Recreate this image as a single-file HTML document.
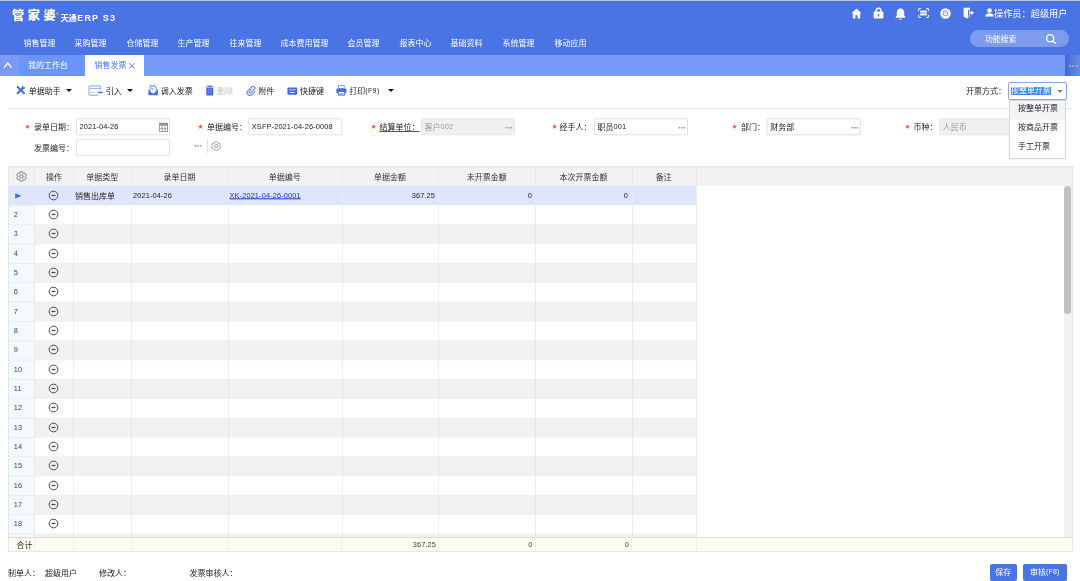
<!DOCTYPE html><html lang="zh-CN"><head><meta charset="utf-8"><title>销售发票</title><style>
*{margin:0;padding:0;box-sizing:border-box}
html,body{width:1080px;height:581px;overflow:hidden;background:#fff}
body{position:relative;will-change:transform;font-family:"Liberation Sans","Noto Sans CJK SC",sans-serif;font-size:8px;color:#222;line-height:1}
.a{position:absolute;white-space:nowrap}
.t{position:absolute;white-space:nowrap;line-height:10px;height:10px;margin-top:1px}
#top{left:0;top:0;width:1080px;height:55px;background:#4a74e4}
#topline{left:0;top:0;width:1080px;height:1px;background:#b9c3e6}
.menu{color:#fff;font-size:8px;top:37.8px}
#tabs{left:0;top:55px;width:1080px;height:21px;background:#769bf9}
#tabcol{left:0;top:55px;width:19px;height:21px;background:#7b9af5}
#tab1{left:19px;top:55px;width:66px;height:21px;background:#6a95fa;color:#fff;padding-left:9px;line-height:22.4px}
#tab2{left:85px;top:55px;width:59px;height:21px;background:#fff;color:#4a74e4;line-height:22.4px}
#more{left:1065px;top:55px;width:15px;height:21px;background:linear-gradient(90deg,#3f68d8,#6a8de8);color:#c9a86a;text-align:center;line-height:18px;font-size:8px}
.tb{top:86.2px;color:#222}
.sep{left:8px;top:108px;width:1064px;height:1px;background:#e4e4e4}
.star{color:#f2522e;font-size:8px}
.inp{position:absolute;left:0;top:0;height:17.2px;width:94.3px;border:1px solid #e1e1e1;border-radius:1px;background:#fff}
.inp.dis{background:#f0f0f0;border-color:#e6e6e6}
.lbl{color:#222}
.dots{color:#888;letter-spacing:0.3px;font-size:8px}
.num{font-size:7.4px;letter-spacing:0.12px;transform:translateY(-0.7px)}span.num{display:inline-block}
</style></head><body>
<div class="a" id="top"></div><div class="a" id="topline"></div>
<div class="t" style="left:12.1px;top:6.9px;color:#fff;font-size:12.3px;font-weight:900;line-height:16px;height:16px;letter-spacing:3.4px;font-family:'Liberation Sans','Noto Sans CJK SC',sans-serif">管家婆</div>
<div class="t" style="left:56.5px;top:8px;color:#fff;font-size:3px">®</div>
<div class="t" style="left:60.6px;top:12.2px;color:#fff;font-size:8.3px;font-weight:700;letter-spacing:-0.3px">天通<span style="letter-spacing:1.2px;font-size:9px;margin-left:0.6px">ERP S3</span></div>
<div class="t menu" style="left:23.5px">销售管理</div>
<div class="t menu" style="left:74.5px">采购管理</div>
<div class="t menu" style="left:126.5px">仓储管理</div>
<div class="t menu" style="left:177.5px">生产管理</div>
<div class="t menu" style="left:229.5px">往来管理</div>
<div class="t menu" style="left:280.5px">成本费用管理</div>
<div class="t menu" style="left:347.5px">会员管理</div>
<div class="t menu" style="left:399.5px">报表中心</div>
<div class="t menu" style="left:450.5px">基础资料</div>
<div class="t menu" style="left:502.5px">系统管理</div>
<div class="t menu" style="left:554.5px">移动应用</div>
<svg class="a" style="left:851px;top:8px" width="11" height="11" viewBox="0 0 11 11"><path d="M5.5 0.6 L0.5 5.3 H1.8 V10.4 H4.4 V7.2 H6.6 V10.4 H9.2 V5.3 H10.5 Z" fill="#fff"/></svg>
<svg class="a" style="left:873.2px;top:7.2px" width="11" height="12" viewBox="0 0 11 12"><path d="M3.1 5.2 V3.6 a2.4 2.4 0 0 1 4.8 0 V5.2" fill="none" stroke="#fff" stroke-width="1.4"/><rect x="0.6" y="4.6" width="9.8" height="6.8" rx="0.8" fill="#fff"/><circle cx="5.5" cy="7.8" r="0.9" fill="#4a74e4"/><rect x="5.1" y="8" width="0.8" height="1.8" fill="#4a74e4"/></svg>
<svg class="a" style="left:895.4px;top:7.5px" width="11" height="12.5" viewBox="0 0 11 12.5"><path d="M5.5 0.5 C2.6 0.5 1.8 2.8 1.8 4.8 V7.2 L0.4 9.7 H10.6 L9.2 7.2 V4.8 C9.2 2.8 8.4 0.5 5.5 0.5 Z" fill="#fff"/><path d="M4.2 10.5 H6.8 A1.3 1.3 0 0 1 4.2 10.5Z" fill="#fff"/></svg>
<svg class="a" style="left:918px;top:8px" width="11" height="10" viewBox="0 0 11 10"><path d="M0.6 3 V0.6 H3 M8 0.6 H10.4 V3 M10.4 7 V9.4 H8 M3 9.4 H0.6 V7" fill="none" stroke="#fff" stroke-width="0.9"/><rect x="2.2" y="2.6" width="6.6" height="2" fill="#fff"/><rect x="2.2" y="5.4" width="6.6" height="2" fill="#fff"/></svg>
<svg class="a" style="left:940.3px;top:8.3px" width="11" height="11" viewBox="0 0 11 11"><circle cx="5.5" cy="5.5" r="5.2" fill="#fff"/><circle cx="5.5" cy="5.3" r="2.5" fill="none" stroke="#5d83e8" stroke-width="0.9"/><circle cx="5.5" cy="5" r="0.8" fill="#7d9bed"/></svg>
<svg class="a" style="left:962.5px;top:7.1px" width="12" height="12" viewBox="0 0 12 12"><path d="M0.8 0.8 H6.8 V2.4 H5 V10.2 H6.8 V10.6 H5 L4.8 11.4 L0.8 9.8 Z" fill="#fff"/><path d="M0.8 0.8 L4.8 2.2 V11.4 L0.8 9.8Z" fill="#fff"/><path d="M6.2 4.8 H8.4 V3.4 L11 5.8 L8.4 8.2 V6.8 H6.2Z" fill="#fff"/><path d="M6.3 1.2 V4.4 M6.3 7.2 V10.2" stroke="#fff" stroke-width="0.9"/></svg>
<svg class="a" style="left:984.8px;top:8.3px" width="9" height="9" viewBox="0 0 9 9"><circle cx="4.5" cy="2.5" r="2.3" fill="#fff"/><path d="M0.3 8.6 C0.3 6.2 2 5.3 4.5 5.3 S8.7 6.2 8.7 8.6 Z" fill="#fff"/></svg>

<div class="t" style="left:994px;top:8px;color:#fff;font-size:9.2px;line-height:11px;height:11px">操作员：超级用户</div>
<div class="a" style="left:970px;top:29.5px;width:98.5px;height:17.5px;border-radius:9px;background:#7f9cec"></div>
<div class="t" style="left:985px;top:34px;color:#fff;font-size:7.8px">功能搜索</div>
<svg class="a" style="left:1045px;top:33px" width="12" height="12" viewBox="0 0 12 12"><circle cx="5.2" cy="5.2" r="3.6" fill="none" stroke="#fff" stroke-width="1.3"/><path d="M7.9 8 L10.4 10.2" stroke="#fff" stroke-width="1.4" stroke-linecap="round"/></svg>

<div class="a" id="tabs"></div><div class="a" id="tabcol"></div>
<div class="a" id="tab1">我的工作台</div>
<div class="a" id="tab2"><span style="margin-left:9.5px">销售发票</span><svg style="position:absolute;left:43.3px;top:6.7px" width="8" height="8" viewBox="0 0 8 8"><path d="M1 1 L6.6 6.6 M6.6 1 L1 6.6" stroke="#6a89ea" stroke-width="1"/></svg></div>
<div class="a" id="more"></div>
<div class="a" style="left:1068.5px;top:64.8px;width:2px;height:2px;border-radius:1px;background:#c9b27a"></div>
<div class="a" style="left:1072px;top:64.8px;width:2px;height:2px;border-radius:1px;background:#c9b27a"></div>
<div class="a" style="left:1075.5px;top:64.8px;width:2px;height:2px;border-radius:1px;background:#c9b27a"></div>
<svg class="a" style="left:3.2px;top:61.4px" width="10" height="8" viewBox="0 0 10 8"><path d="M1 6.6 L4.8 2 L8.6 6.6" fill="none" stroke="#fff" stroke-width="1.35"/></svg>
<svg class="a" style="left:16px;top:85.3px" width="10" height="10" viewBox="0 0 10 10"><path d="M1.6 1.9 L8 8.3" stroke="#4068e2" stroke-width="2" stroke-linecap="round"/><path d="M1.6 8.3 L7.2 2.7" stroke="#4068e2" stroke-width="2" stroke-linecap="round"/><circle cx="7.3" cy="2.5" r="1.75" fill="#4068e2"/><circle cx="8.2" cy="1.5" r="0.95" fill="#fff"/></svg>
<div class="t tb" style="left:28.7px">单据助手</div>
<div class="a" style="left:65.5px;top:89.2px;width:0;height:0;border-left:3.5px solid transparent;border-right:3.5px solid transparent;border-top:3.5px solid #111"></div>
<svg class="a" style="left:87.5px;top:85px" width="16" height="11" viewBox="0 0 16 11"><path d="M12.7 4.7 V2 Q12.7 0.9 11.6 0.9 H2 Q0.9 0.9 0.9 2 V9.2 Q0.9 10.3 2 10.3 H10" fill="none" stroke="#9db4f8" stroke-width="1.15"/><path d="M0.9 3.4 H12.7" stroke="#9db4f8" stroke-width="1.1"/><path d="M2.6 7.5 H6" stroke="#a9bdf8" stroke-width="0.9"/><path d="M10.4 7.5 H14" stroke="#4a70e6" stroke-width="1.6" stroke-linecap="round"/></svg>
<div class="t tb" style="left:105.7px">引入</div>
<div class="a" style="left:126.8px;top:89.2px;width:0;height:0;border-left:3.5px solid transparent;border-right:3.5px solid transparent;border-top:3.5px solid #111"></div>
<svg class="a" style="left:147.7px;top:85px" width="10.4" height="10.8" viewBox="0 0 11 11" preserveAspectRatio="none"><path d="M2.3 0.3 H7.2 L9.2 2.3 V7.5 H1.7 V0.9 Q1.7 0.3 2.3 0.3Z" fill="#7595f0"/><path d="M2.7 1.5 H6.8 L8.2 2.9 V6.4 L5.45 8.6 L2.7 6.4Z" fill="#fff"/><ellipse cx="4.6" cy="3.9" rx="1.5" ry="0.95" fill="#a3b9f6" transform="rotate(20 4.6 3.9)"/><path d="M0.4 5 L1.7 4.6 V6.5 L5.45 9 L9.2 6.5 V4.6 L10.5 5 V10.1 Q10.5 10.5 10.1 10.5 H0.8 Q0.4 10.5 0.4 10.1Z" fill="#4169e1"/></svg>
<div class="t tb" style="left:160.7px">调入发票</div>
<svg class="a" style="left:205px;top:85px" width="9" height="11" viewBox="0 0 9 11"><path d="M2.2 0.6 H7.4 V2 H2.2Z" fill="#4a70e6"/><path d="M0.3 2.3 H8.7" stroke="#9db3f6" stroke-width="0.7"/><path d="M1.3 2.7 H8.3 V9.5 Q8.3 10.4 7.4 10.4 H2.2 Q1.3 10.4 1.3 9.5Z" fill="#4169e1"/><path d="M3.7 3.4 V8.6 M5.9 3.4 V8.6" stroke="#7f9cf0" stroke-width="0.7"/></svg>
<div class="t tb" style="left:217px;color:#c4c4c4">删除</div>
<svg class="a" style="left:245.5px;top:85.5px" width="11" height="10" viewBox="0 0 11 10"><path d="M5.4 3.6 L3.4 5.7 A1.05 1.05 0 0 0 4.9 7.2 L8.8 3.3 A2 2 0 0 0 6 0.9 L1.6 5.1 A2.9 2.9 0 0 0 5.7 9.1 L9 5.9" fill="none" stroke="#6a8df1" stroke-width="1.2" stroke-linecap="round" transform="translate(0 -0.3)"/></svg>
<div class="t tb" style="left:258.3px">附件</div>
<svg class="a" style="left:287px;top:86.5px" width="11" height="8.5" viewBox="0 0 11 8.5"><rect x="0.4" y="0.4" width="9.8" height="7.3" rx="1.2" fill="#456ae6"/><rect x="2" y="2.1" width="6.6" height="1.2" fill="#a9bdf7"/><rect x="3" y="4.9" width="4.6" height="1.1" fill="#dfe7fd"/></svg>
<div class="t tb" style="left:300px">快捷键</div>
<svg class="a" style="left:336px;top:85px" width="11" height="11" viewBox="0 0 11 11"><rect x="2.6" y="0.5" width="5.6" height="3.2" fill="#fff" stroke="#6d90f2" stroke-width="0.8"/><rect x="0.4" y="3.4" width="10" height="4.8" rx="0.8" fill="#456ae6"/><rect x="2.4" y="6.6" width="6" height="3.6" fill="#fff" stroke="#456ae6" stroke-width="0.8"/><rect x="3.2" y="8.4" width="4.4" height="1.4" fill="#6d90f2"/></svg>
<div class="t tb" style="left:349.2px">打印<span class="num" style="font-size:7px;letter-spacing:0.4px">(F9)</span></div>
<div class="a" style="left:388.2px;top:89.2px;width:0;height:0;border-left:3.5px solid transparent;border-right:3.5px solid transparent;border-top:3.5px solid #111"></div>

<div class="a sep"></div>
<div class="t lbl" style="left:966px;top:86px">开票方式：</div>
<div class="a" style="left:1008px;top:82px;width:59px;height:17.5px;border:1px solid #8ba6f0;border-radius:2px;background:#fff"></div>
<div class="t" style="left:1011.1px;top:85.8px;background:#3b8cf6;color:#fff;width:39.6px;line-height:7.8px;height:7.8px;font-size:7.9px">按整单开票</div>
<div class="a" style="left:1057px;top:89.5px;width:0;height:0;border-left:3px solid transparent;border-right:3px solid transparent;border-top:3.5px solid #888"></div>
<svg class="a" style="left:25.2px;top:123.8px" width="5" height="5" viewBox="0 0 10 10"><path d="M5 0.3 L6.3 3.6 L9.8 3.8 L7.1 6.1 L8 9.6 L5 7.6 L2 9.6 L2.9 6.1 L0.2 3.8 L3.7 3.6Z" fill="#ef5a36"/></svg>
<div class="t lbl" style="left:34px;top:122px">录单日期：</div>
<div class="inp" style="transform:translate(76px,118.3px)"></div>
<div class="t" style="left:79.5px;top:122px;color:#222"><span class="num">2021-04-26</span></div>
<svg class="a" style="left:198.2px;top:123.8px" width="5" height="5" viewBox="0 0 10 10"><path d="M5 0.3 L6.3 3.6 L9.8 3.8 L7.1 6.1 L8 9.6 L5 7.6 L2 9.6 L2.9 6.1 L0.2 3.8 L3.7 3.6Z" fill="#ef5a36"/></svg>
<div class="t lbl" style="left:207px;top:122px">单据编号：</div>
<div class="inp" style="transform:translate(248.3px,118.3px)"></div>
<div class="t" style="left:251.8px;top:122px;color:#222"><span class="num">XSFP-2021-04-26-0008</span></div>
<svg class="a" style="left:371.2px;top:123.8px" width="5" height="5" viewBox="0 0 10 10"><path d="M5 0.3 L6.3 3.6 L9.8 3.8 L7.1 6.1 L8 9.6 L5 7.6 L2 9.6 L2.9 6.1 L0.2 3.8 L3.7 3.6Z" fill="#ef5a36"/></svg>
<div class="t lbl" style="left:379.5px;top:122px;text-decoration:underline;text-decoration-color:#2b4fe0;text-underline-offset:1px;text-decoration-skip-ink:none">结算单位：</div>
<div class="inp dis" style="transform:translate(421px,118.3px)"></div>
<div class="t" style="left:424.5px;top:122px;color:#999">客户<span class="num">002</span></div>
<svg class="a" style="left:505.2px;top:125.6px" width="9" height="4" viewBox="0 0 9 4"><rect x="0.5" y="1" width="1.6" height="1.5" fill="#9a9aa8"/><rect x="3.1" y="1" width="1.6" height="1.5" fill="#9a9aa8"/><rect x="5.7" y="1" width="1.6" height="1.5" fill="#9a9aa8"/></svg>
<svg class="a" style="left:551.7px;top:123.8px" width="5" height="5" viewBox="0 0 10 10"><path d="M5 0.3 L6.3 3.6 L9.8 3.8 L7.1 6.1 L8 9.6 L5 7.6 L2 9.6 L2.9 6.1 L0.2 3.8 L3.7 3.6Z" fill="#ef5a36"/></svg>
<div class="t lbl" style="left:559.5px;top:122px">经手人：</div>
<div class="inp" style="transform:translate(594px,118.3px)"></div>
<div class="t" style="left:597.5px;top:122px;color:#222">职员<span class="num">001</span></div>
<svg class="a" style="left:678.2px;top:125.6px" width="9" height="4" viewBox="0 0 9 4"><rect x="0.5" y="1" width="1.6" height="1.5" fill="#9a9aa8"/><rect x="3.1" y="1" width="1.6" height="1.5" fill="#9a9aa8"/><rect x="5.7" y="1" width="1.6" height="1.5" fill="#9a9aa8"/></svg>
<svg class="a" style="left:731.7px;top:123.8px" width="5" height="5" viewBox="0 0 10 10"><path d="M5 0.3 L6.3 3.6 L9.8 3.8 L7.1 6.1 L8 9.6 L5 7.6 L2 9.6 L2.9 6.1 L0.2 3.8 L3.7 3.6Z" fill="#ef5a36"/></svg>
<div class="t lbl" style="left:741px;top:122px">部门：</div>
<div class="inp" style="transform:translate(766.7px,118.3px)"></div>
<div class="t" style="left:770.2px;top:122px;color:#222">财务部</div>
<svg class="a" style="left:850.9px;top:125.6px" width="9" height="4" viewBox="0 0 9 4"><rect x="0.5" y="1" width="1.6" height="1.5" fill="#9a9aa8"/><rect x="3.1" y="1" width="1.6" height="1.5" fill="#9a9aa8"/><rect x="5.7" y="1" width="1.6" height="1.5" fill="#9a9aa8"/></svg>
<svg class="a" style="left:905.2px;top:123.8px" width="5" height="5" viewBox="0 0 10 10"><path d="M5 0.3 L6.3 3.6 L9.8 3.8 L7.1 6.1 L8 9.6 L5 7.6 L2 9.6 L2.9 6.1 L0.2 3.8 L3.7 3.6Z" fill="#ef5a36"/></svg>
<div class="t lbl" style="left:913.5px;top:122px">币种：</div>
<div class="inp dis" style="transform:translate(939.3px,118.3px)"></div>
<div class="t" style="left:942.8px;top:122px;color:#999">人民币</div>
<div class="t lbl" style="left:34px;top:142.5px">发票编号：</div>
<div class="inp" style="transform:translate(76px,139.2px)"></div>
<svg class="a" style="left:193.9px;top:144.4px" width="9" height="4" viewBox="0 0 9 4"><rect x="0.5" y="1" width="1.6" height="1.5" fill="#9a9aa8"/><rect x="3.1" y="1" width="1.6" height="1.5" fill="#9a9aa8"/><rect x="5.7" y="1" width="1.6" height="1.5" fill="#9a9aa8"/></svg>
<div class="a" style="left:207px;top:139px;width:1px;height:14.3px;background:#e2e2e2"></div>
<svg class="a" style="left:158.8px;top:121.8px" width="9.3" height="10.6" viewBox="0 0 10 11" preserveAspectRatio="none"><path d="M2.2 0.4 V2 M5 0.4 V2 M7.8 0.4 V2" stroke="#8c8c8c" stroke-width="0.9"/><rect x="0.5" y="1.3" width="9" height="2.5" fill="#909090"/><rect x="0.7" y="1.5" width="8.6" height="8.6" fill="none" stroke="#8a8a8a" stroke-width="0.9"/><path d="M3.55 3.8 V10 M6.45 3.8 V10 M0.8 6.9 H9.2" stroke="#8e8e8e" stroke-width="0.8"/></svg>
<svg class="a" style="left:211.1px;top:141.2px" width="10.3" height="10.3" viewBox="0 0 11 11"><path d="M5.50 0.67 Q6.79 0.67 6.93 1.41 Q7.08 2.15 7.34 2.31 Q7.61 2.46 8.32 2.21 Q9.04 1.96 9.68 3.09 Q10.33 4.21 9.76 4.70 Q9.19 5.19 9.19 5.50 Q9.19 5.81 9.76 6.30 Q10.33 6.79 9.68 7.91 Q9.04 9.04 8.32 8.79 Q7.61 8.54 7.34 8.69 Q7.08 8.85 6.93 9.59 Q6.79 10.33 5.50 10.33 Q4.21 10.33 4.07 9.59 Q3.92 8.85 3.66 8.69 Q3.39 8.54 2.68 8.79 Q1.96 9.04 1.32 7.91 Q0.67 6.79 1.24 6.30 Q1.81 5.81 1.81 5.50 Q1.81 5.19 1.24 4.70 Q0.67 4.21 1.32 3.09 Q1.96 1.96 2.68 2.21 Q3.39 2.46 3.66 2.31 Q3.92 2.15 4.07 1.41 Q4.21 0.67 5.50 0.67Z" fill="none" stroke="#84848c" stroke-width="0.8" stroke-linejoin="round"/><circle cx="5.5" cy="5.5" r="1.7" fill="none" stroke="#84848c" stroke-width="0.8"/></svg>

<div class="a" style="left:1009px;top:100px;width:57px;height:58.5px;border:1px solid #d8d8d8;background:#fff;box-shadow:0 0.5px 1.5px rgba(0,0,0,.08)"></div>
<div class="a" style="left:1010px;top:101px;width:55px;height:18.5px;background:#f3f5f7"></div>
<div class="t" style="left:1018px;top:102.6px;color:#222">按整单开票</div>
<div class="t" style="left:1018px;top:121.89999999999999px;color:#222">按商品开票</div>
<div class="t" style="left:1018px;top:141.2px;color:#222">手工开票</div>
<div class="a" style="left:8px;top:166px;width:1064px;height:20px;background:#f2f2f2;border-top:1px solid #e4e8ed;border-bottom:1px solid #eceff3"></div>
<div class="a" style="left:8px;top:167px;width:1064px;height:1px;background:#e4e8ed;opacity:0.5"></div>
<svg class="a" style="left:0;top:186px" width="1080" height="352" viewBox="0 186 1080 352"><rect x="8.5" y="186" width="26" height="351.5" fill="#f4f9fe"/><rect x="8.5" y="204.93" width="26" height="0.9" fill="#e3ecf6"/><rect x="34.5" y="224.27" width="661.8" height="20.13" fill="#f1f1f1"/><rect x="8.5" y="224.27" width="26" height="0.9" fill="#e3ecf6"/><rect x="8.5" y="243.60" width="26" height="0.9" fill="#e3ecf6"/><rect x="34.5" y="262.93" width="661.8" height="20.13" fill="#f1f1f1"/><rect x="8.5" y="262.93" width="26" height="0.9" fill="#e3ecf6"/><rect x="8.5" y="282.26" width="26" height="0.9" fill="#e3ecf6"/><rect x="34.5" y="301.60" width="661.8" height="20.13" fill="#f1f1f1"/><rect x="8.5" y="301.60" width="26" height="0.9" fill="#e3ecf6"/><rect x="8.5" y="320.93" width="26" height="0.9" fill="#e3ecf6"/><rect x="34.5" y="340.26" width="661.8" height="20.13" fill="#f1f1f1"/><rect x="8.5" y="340.26" width="26" height="0.9" fill="#e3ecf6"/><rect x="8.5" y="359.60" width="26" height="0.9" fill="#e3ecf6"/><rect x="34.5" y="378.93" width="661.8" height="20.13" fill="#f1f1f1"/><rect x="8.5" y="378.93" width="26" height="0.9" fill="#e3ecf6"/><rect x="8.5" y="398.26" width="26" height="0.9" fill="#e3ecf6"/><rect x="34.5" y="417.60" width="661.8" height="20.13" fill="#f1f1f1"/><rect x="8.5" y="417.60" width="26" height="0.9" fill="#e3ecf6"/><rect x="8.5" y="436.93" width="26" height="0.9" fill="#e3ecf6"/><rect x="34.5" y="456.26" width="661.8" height="20.13" fill="#f1f1f1"/><rect x="8.5" y="456.26" width="26" height="0.9" fill="#e3ecf6"/><rect x="8.5" y="475.60" width="26" height="0.9" fill="#e3ecf6"/><rect x="34.5" y="494.93" width="661.8" height="20.13" fill="#f1f1f1"/><rect x="8.5" y="494.93" width="26" height="0.9" fill="#e3ecf6"/><rect x="8.5" y="514.26" width="26" height="0.9" fill="#e3ecf6"/><rect x="34.5" y="533.59" width="661.8" height="3.91" fill="#f1f1f1"/><rect x="8.5" y="533.59" width="26" height="0.9" fill="#e3ecf6"/></svg>
<div class="a" style="left:34.3px;top:166px;width:1.2px;height:20px;background:rgba(212,224,242,0.45)"></div>
<div class="a" style="left:34.3px;top:186px;width:1.2px;height:365px;background:rgba(190,192,196,0.26)"></div>
<div class="a" style="left:73.1px;top:166px;width:1.2px;height:20px;background:rgba(212,224,242,0.45)"></div>
<div class="a" style="left:73.1px;top:186px;width:1.2px;height:365px;background:rgba(190,192,196,0.26)"></div>
<div class="a" style="left:131.1px;top:166px;width:1.2px;height:20px;background:rgba(212,224,242,0.45)"></div>
<div class="a" style="left:131.1px;top:186px;width:1.2px;height:365px;background:rgba(190,192,196,0.26)"></div>
<div class="a" style="left:227.5px;top:166px;width:1.2px;height:20px;background:rgba(212,224,242,0.45)"></div>
<div class="a" style="left:227.5px;top:186px;width:1.2px;height:365px;background:rgba(190,192,196,0.26)"></div>
<div class="a" style="left:341.5px;top:166px;width:1.2px;height:20px;background:rgba(212,224,242,0.45)"></div>
<div class="a" style="left:341.5px;top:186px;width:1.2px;height:365px;background:rgba(190,192,196,0.26)"></div>
<div class="a" style="left:438.1px;top:166px;width:1.2px;height:20px;background:rgba(212,224,242,0.45)"></div>
<div class="a" style="left:438.1px;top:186px;width:1.2px;height:365px;background:rgba(190,192,196,0.26)"></div>
<div class="a" style="left:535.1px;top:166px;width:1.2px;height:20px;background:rgba(212,224,242,0.45)"></div>
<div class="a" style="left:535.1px;top:186px;width:1.2px;height:365px;background:rgba(190,192,196,0.26)"></div>
<div class="a" style="left:631.5px;top:166px;width:1.2px;height:20px;background:rgba(212,224,242,0.45)"></div>
<div class="a" style="left:631.5px;top:186px;width:1.2px;height:365px;background:rgba(190,192,196,0.26)"></div>
<div class="a" style="left:695.8px;top:166px;width:1.2px;height:20px;background:rgba(212,224,242,0.45)"></div>
<div class="a" style="left:695.8px;top:186px;width:1.2px;height:365px;background:rgba(190,192,196,0.26)"></div>
<div class="a" style="left:8.5px;top:186px;width:687.5px;height:19px;background:#dfe6fb"></div>
<div class="a" style="left:34.3px;top:186px;width:1.2px;height:19px;background:rgba(255,255,255,0.22)"></div>
<div class="a" style="left:73.1px;top:186px;width:1.2px;height:19px;background:rgba(255,255,255,0.22)"></div>
<div class="a" style="left:131.1px;top:186px;width:1.2px;height:19px;background:rgba(255,255,255,0.22)"></div>
<div class="a" style="left:227.5px;top:186px;width:1.2px;height:19px;background:rgba(255,255,255,0.22)"></div>
<div class="a" style="left:341.5px;top:186px;width:1.2px;height:19px;background:rgba(255,255,255,0.22)"></div>
<div class="a" style="left:438.1px;top:186px;width:1.2px;height:19px;background:rgba(255,255,255,0.22)"></div>
<div class="a" style="left:535.1px;top:186px;width:1.2px;height:19px;background:rgba(255,255,255,0.22)"></div>
<div class="a" style="left:631.5px;top:186px;width:1.2px;height:19px;background:rgba(255,255,255,0.22)"></div>
<svg class="a" style="left:14.8px;top:192.70px" width="7" height="6" viewBox="0 0 7 6"><path d="M0.2 0.3 L6.5 2.9 L0.2 5.5Z" fill="#3f6ef0"/></svg>
<svg class="a" style="left:47.6px;top:189.80px" width="11" height="11" viewBox="0 0 11 11"><circle cx="5.5" cy="5.5" r="4.35" fill="none" stroke="#46403e" stroke-width="0.95"/><path d="M3.55 5.5H7.45" stroke="#46403e" stroke-width="1.2"/></svg>
<div class="t" style="left:13.8px;top:208.93px;color:#444;font-size:7.4px">2</div>
<svg class="a" style="left:47.6px;top:209.13px" width="11" height="11" viewBox="0 0 11 11"><circle cx="5.5" cy="5.5" r="4.35" fill="none" stroke="#46403e" stroke-width="0.95"/><path d="M3.55 5.5H7.45" stroke="#46403e" stroke-width="1.2"/></svg>
<div class="t" style="left:13.8px;top:228.27px;color:#444;font-size:7.4px">3</div>
<svg class="a" style="left:47.6px;top:228.47px" width="11" height="11" viewBox="0 0 11 11"><circle cx="5.5" cy="5.5" r="4.35" fill="none" stroke="#46403e" stroke-width="0.95"/><path d="M3.55 5.5H7.45" stroke="#46403e" stroke-width="1.2"/></svg>
<div class="t" style="left:13.8px;top:247.60px;color:#444;font-size:7.4px">4</div>
<svg class="a" style="left:47.6px;top:247.80px" width="11" height="11" viewBox="0 0 11 11"><circle cx="5.5" cy="5.5" r="4.35" fill="none" stroke="#46403e" stroke-width="0.95"/><path d="M3.55 5.5H7.45" stroke="#46403e" stroke-width="1.2"/></svg>
<div class="t" style="left:13.8px;top:266.93px;color:#444;font-size:7.4px">5</div>
<svg class="a" style="left:47.6px;top:267.13px" width="11" height="11" viewBox="0 0 11 11"><circle cx="5.5" cy="5.5" r="4.35" fill="none" stroke="#46403e" stroke-width="0.95"/><path d="M3.55 5.5H7.45" stroke="#46403e" stroke-width="1.2"/></svg>
<div class="t" style="left:13.8px;top:286.26px;color:#444;font-size:7.4px">6</div>
<svg class="a" style="left:47.6px;top:286.46px" width="11" height="11" viewBox="0 0 11 11"><circle cx="5.5" cy="5.5" r="4.35" fill="none" stroke="#46403e" stroke-width="0.95"/><path d="M3.55 5.5H7.45" stroke="#46403e" stroke-width="1.2"/></svg>
<div class="t" style="left:13.8px;top:305.60px;color:#444;font-size:7.4px">7</div>
<svg class="a" style="left:47.6px;top:305.80px" width="11" height="11" viewBox="0 0 11 11"><circle cx="5.5" cy="5.5" r="4.35" fill="none" stroke="#46403e" stroke-width="0.95"/><path d="M3.55 5.5H7.45" stroke="#46403e" stroke-width="1.2"/></svg>
<div class="t" style="left:13.8px;top:324.93px;color:#444;font-size:7.4px">8</div>
<svg class="a" style="left:47.6px;top:325.13px" width="11" height="11" viewBox="0 0 11 11"><circle cx="5.5" cy="5.5" r="4.35" fill="none" stroke="#46403e" stroke-width="0.95"/><path d="M3.55 5.5H7.45" stroke="#46403e" stroke-width="1.2"/></svg>
<div class="t" style="left:13.8px;top:344.26px;color:#444;font-size:7.4px">9</div>
<svg class="a" style="left:47.6px;top:344.46px" width="11" height="11" viewBox="0 0 11 11"><circle cx="5.5" cy="5.5" r="4.35" fill="none" stroke="#46403e" stroke-width="0.95"/><path d="M3.55 5.5H7.45" stroke="#46403e" stroke-width="1.2"/></svg>
<div class="t" style="left:13.8px;top:363.60px;color:#444;font-size:7.4px">10</div>
<svg class="a" style="left:47.6px;top:363.80px" width="11" height="11" viewBox="0 0 11 11"><circle cx="5.5" cy="5.5" r="4.35" fill="none" stroke="#46403e" stroke-width="0.95"/><path d="M3.55 5.5H7.45" stroke="#46403e" stroke-width="1.2"/></svg>
<div class="t" style="left:13.8px;top:382.93px;color:#444;font-size:7.4px">11</div>
<svg class="a" style="left:47.6px;top:383.13px" width="11" height="11" viewBox="0 0 11 11"><circle cx="5.5" cy="5.5" r="4.35" fill="none" stroke="#46403e" stroke-width="0.95"/><path d="M3.55 5.5H7.45" stroke="#46403e" stroke-width="1.2"/></svg>
<div class="t" style="left:13.8px;top:402.26px;color:#444;font-size:7.4px">12</div>
<svg class="a" style="left:47.6px;top:402.46px" width="11" height="11" viewBox="0 0 11 11"><circle cx="5.5" cy="5.5" r="4.35" fill="none" stroke="#46403e" stroke-width="0.95"/><path d="M3.55 5.5H7.45" stroke="#46403e" stroke-width="1.2"/></svg>
<div class="t" style="left:13.8px;top:421.60px;color:#444;font-size:7.4px">13</div>
<svg class="a" style="left:47.6px;top:421.80px" width="11" height="11" viewBox="0 0 11 11"><circle cx="5.5" cy="5.5" r="4.35" fill="none" stroke="#46403e" stroke-width="0.95"/><path d="M3.55 5.5H7.45" stroke="#46403e" stroke-width="1.2"/></svg>
<div class="t" style="left:13.8px;top:440.93px;color:#444;font-size:7.4px">14</div>
<svg class="a" style="left:47.6px;top:441.13px" width="11" height="11" viewBox="0 0 11 11"><circle cx="5.5" cy="5.5" r="4.35" fill="none" stroke="#46403e" stroke-width="0.95"/><path d="M3.55 5.5H7.45" stroke="#46403e" stroke-width="1.2"/></svg>
<div class="t" style="left:13.8px;top:460.26px;color:#444;font-size:7.4px">15</div>
<svg class="a" style="left:47.6px;top:460.46px" width="11" height="11" viewBox="0 0 11 11"><circle cx="5.5" cy="5.5" r="4.35" fill="none" stroke="#46403e" stroke-width="0.95"/><path d="M3.55 5.5H7.45" stroke="#46403e" stroke-width="1.2"/></svg>
<div class="t" style="left:13.8px;top:479.60px;color:#444;font-size:7.4px">16</div>
<svg class="a" style="left:47.6px;top:479.80px" width="11" height="11" viewBox="0 0 11 11"><circle cx="5.5" cy="5.5" r="4.35" fill="none" stroke="#46403e" stroke-width="0.95"/><path d="M3.55 5.5H7.45" stroke="#46403e" stroke-width="1.2"/></svg>
<div class="t" style="left:13.8px;top:498.93px;color:#444;font-size:7.4px">17</div>
<svg class="a" style="left:47.6px;top:499.13px" width="11" height="11" viewBox="0 0 11 11"><circle cx="5.5" cy="5.5" r="4.35" fill="none" stroke="#46403e" stroke-width="0.95"/><path d="M3.55 5.5H7.45" stroke="#46403e" stroke-width="1.2"/></svg>
<div class="t" style="left:13.8px;top:518.26px;color:#444;font-size:7.4px">18</div>
<svg class="a" style="left:47.6px;top:518.46px" width="11" height="11" viewBox="0 0 11 11"><circle cx="5.5" cy="5.5" r="4.35" fill="none" stroke="#46403e" stroke-width="0.95"/><path d="M3.55 5.5H7.45" stroke="#46403e" stroke-width="1.2"/></svg>
<svg class="a" style="left:16.2px;top:170.6px" width="11" height="11" viewBox="0 0 11 11"><path d="M5.50 0.67 Q6.79 0.67 6.93 1.41 Q7.08 2.15 7.34 2.31 Q7.61 2.46 8.32 2.21 Q9.04 1.96 9.68 3.09 Q10.33 4.21 9.76 4.70 Q9.19 5.19 9.19 5.50 Q9.19 5.81 9.76 6.30 Q10.33 6.79 9.68 7.91 Q9.04 9.04 8.32 8.79 Q7.61 8.54 7.34 8.69 Q7.08 8.85 6.93 9.59 Q6.79 10.33 5.50 10.33 Q4.21 10.33 4.07 9.59 Q3.92 8.85 3.66 8.69 Q3.39 8.54 2.68 8.79 Q1.96 9.04 1.32 7.91 Q0.67 6.79 1.24 6.30 Q1.81 5.81 1.81 5.50 Q1.81 5.19 1.24 4.70 Q0.67 4.21 1.32 3.09 Q1.96 1.96 2.68 2.21 Q3.39 2.46 3.66 2.31 Q3.92 2.15 4.07 1.41 Q4.21 0.67 5.50 0.67Z" fill="none" stroke="#6c6c72" stroke-width="0.95" stroke-linejoin="round"/><circle cx="5.5" cy="5.5" r="1.7" fill="none" stroke="#6c6c72" stroke-width="0.95"/></svg>
<div class="t" style="left:13.899999999999999px;width:80px;text-align:center;top:171.5px;color:#333">操作</div>
<div class="t" style="left:62.30000000000001px;width:80px;text-align:center;top:171.5px;color:#333">单据类型</div>
<div class="t" style="left:139.5px;width:80px;text-align:center;top:171.5px;color:#333">录单日期</div>
<div class="t" style="left:244.7px;width:80px;text-align:center;top:171.5px;color:#333">单据编号</div>
<div class="t" style="left:350.0px;width:80px;text-align:center;top:171.5px;color:#333">单据金额</div>
<div class="t" style="left:446.79999999999995px;width:80px;text-align:center;top:171.5px;color:#333">未开票金额</div>
<div class="t" style="left:543.5px;width:80px;text-align:center;top:171.5px;color:#333">本次开票金额</div>
<div class="t" style="left:623.85px;width:80px;text-align:center;top:171.5px;color:#333">备注</div>
<div class="t" style="left:75px;top:190.5px">销售出库单</div>
<div class="t num" style="left:133px;top:190.5px">2021-04-26</div>
<div class="t num" style="left:229.5px;top:190.5px;color:#1f30e2;text-decoration:underline;text-underline-offset:0.4px;text-decoration-thickness:0.8px;text-decoration-skip-ink:none">XK-2021-04-26-0001</div>
<div class="t num" style="left:380px;width:55px;text-align:right;top:190.5px">367.25</div>
<div class="t num" style="left:480px;width:52px;text-align:right;top:190.5px">0</div>
<div class="t num" style="left:576px;width:52px;text-align:right;top:190.5px">0</div>
<div class="a" style="left:1064px;top:186px;width:7.8px;height:351.5px;background:#f1f1f1"></div>
<div class="a" style="left:1064.3px;top:186px;width:7px;height:128px;background:#c1c1c1;border-radius:3.5px"></div>
<div class="a" style="left:8px;top:537px;width:1064px;height:14.5px;background:#fefbf3;border-top:1px solid #dedede;border-bottom:1px solid #e6e6e6"></div>
<div class="a" style="left:34.0px;top:538px;width:1px;height:13px;background:rgba(200,205,215,0.25)"></div>
<div class="a" style="left:72.8px;top:538px;width:1px;height:13px;background:rgba(200,205,215,0.25)"></div>
<div class="a" style="left:130.8px;top:538px;width:1px;height:13px;background:rgba(200,205,215,0.25)"></div>
<div class="a" style="left:227.2px;top:538px;width:1px;height:13px;background:rgba(200,205,215,0.25)"></div>
<div class="a" style="left:341.2px;top:538px;width:1px;height:13px;background:rgba(200,205,215,0.25)"></div>
<div class="a" style="left:437.8px;top:538px;width:1px;height:13px;background:rgba(200,205,215,0.25)"></div>
<div class="a" style="left:534.8px;top:538px;width:1px;height:13px;background:rgba(200,205,215,0.25)"></div>
<div class="a" style="left:631.2px;top:538px;width:1px;height:13px;background:rgba(200,205,215,0.25)"></div>
<div class="a" style="left:695.5px;top:538px;width:1px;height:13px;background:rgba(200,205,215,0.25)"></div>
<div class="t" style="left:16.5px;top:539.5px;color:#333">合计</div>
<div class="t num" style="left:380px;width:56px;text-align:right;top:540px;color:#444">367.25</div>
<div class="t num" style="left:480px;width:52.5px;text-align:right;top:540px;color:#444">0</div>
<div class="t num" style="left:576px;width:53px;text-align:right;top:540px;color:#444">0</div>
<div class="a" style="left:8px;top:166px;width:1px;height:385px;background:#e3e6ea"></div>
<div class="a" style="left:1071.5px;top:166px;width:1px;height:385px;background:#e3e6ea"></div>
<div class="t" style="left:8px;top:568px">制单人：</div>
<div class="t" style="left:45px;top:568px">超级用户</div>
<div class="t" style="left:99px;top:568px">修改人：</div>
<div class="t" style="left:189.5px;top:568px">发票审核人：</div>
<div class="a" style="left:989.5px;top:564px;width:27.5px;height:16.5px;background:#4a74e4;border-radius:2px;color:#fff;text-align:center;line-height:18.6px">保存</div>
<div class="a" style="left:1023px;top:564px;width:43.5px;height:16.5px;background:#4a74e4;border-radius:2px;color:#fff;text-align:center;line-height:18.6px">审核<span class="num" style="font-size:7px">(F8)</span></div>
</body></html>
